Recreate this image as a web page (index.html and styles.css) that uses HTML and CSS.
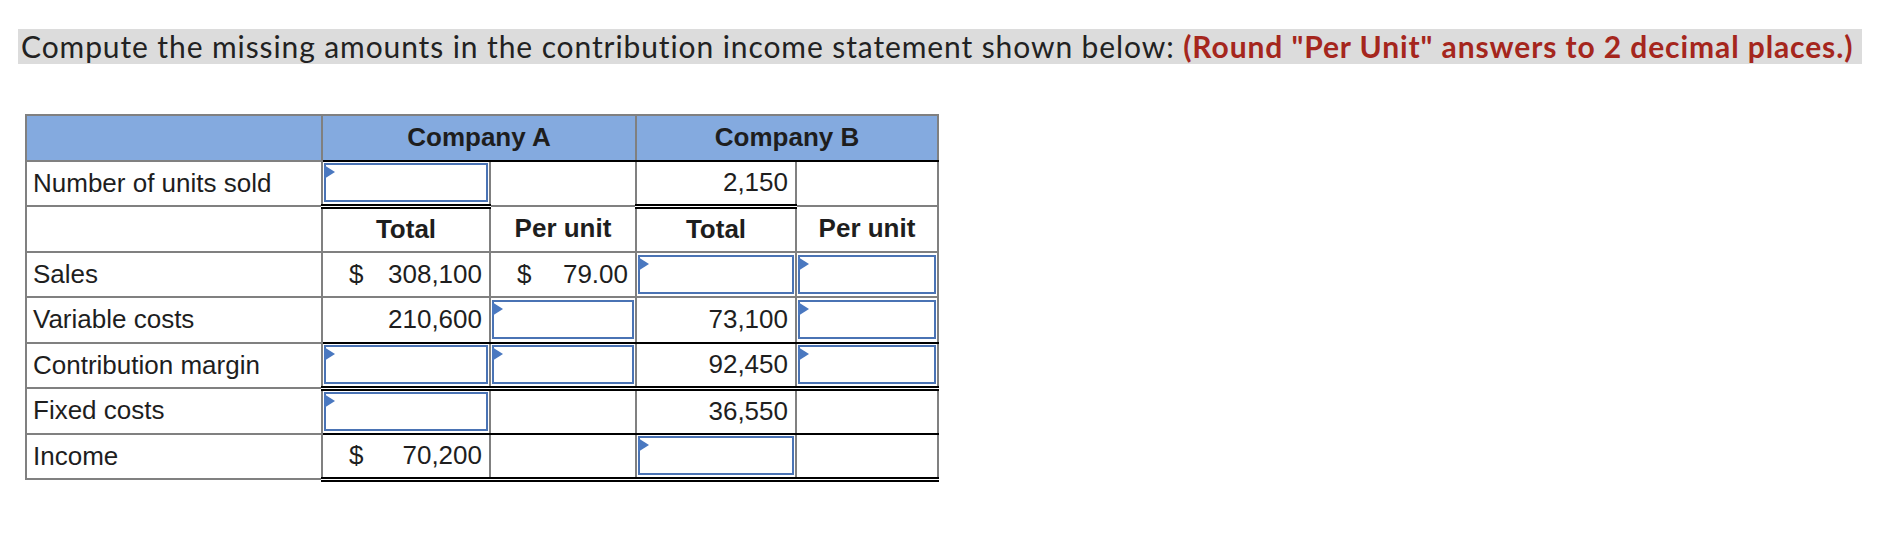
FILE: index.html
```html
<!DOCTYPE html>
<html lang="en">
<head>
<meta charset="utf-8">
<title>Contribution income statement</title>
<link rel="stylesheet" href="styles.css">
</head>
<body>
<div class="page">
  <p class="prompt"><span class="prompt-bg">Compute the missing amounts in the contribution income statement shown below: <strong class="note">(Round "Per Unit" answers to 2 decimal places.)</strong></span></p>

  <table class="stmt">
    <colgroup>
      <col class="c-label"><col class="c-at"><col class="c-au"><col class="c-bt"><col class="c-bu">
    </colgroup>
    <tr class="hdr">
      <th class="blank"></th>
      <th colspan="2" class="co">Company A</th>
      <th colspan="2" class="co">Company B</th>
    </tr>
    <tr>
      <td class="label">Number of units sold</td>
      <td class="inp-cell dbl"><div class="inp"></div></td>
      <td></td>
      <td class="num dbl">2,150</td>
      <td></td>
    </tr>
    <tr>
      <td class="label"></td>
      <th class="sub">Total</th>
      <th class="sub">Per unit</th>
      <th class="sub">Total</th>
      <th class="sub">Per unit</th>
    </tr>
    <tr>
      <td class="label">Sales</td>
      <td class="money"><div class="money-in"><span>$</span><span>308,100</span></div></td>
      <td class="money"><div class="money-in"><span>$</span><span>79.00</span></div></td>
      <td class="inp-cell"><div class="inp"></div></td>
      <td class="inp-cell"><div class="inp"></div></td>
    </tr>
    <tr>
      <td class="label">Variable costs</td>
      <td class="num sgl">210,600</td>
      <td class="inp-cell sgl"><div class="inp"></div></td>
      <td class="num sgl">73,100</td>
      <td class="inp-cell sgl"><div class="inp"></div></td>
    </tr>
    <tr>
      <td class="label">Contribution margin</td>
      <td class="inp-cell dbl"><div class="inp"></div></td>
      <td class="inp-cell dbl"><div class="inp"></div></td>
      <td class="num dbl">92,450</td>
      <td class="inp-cell dbl"><div class="inp"></div></td>
    </tr>
    <tr>
      <td class="label">Fixed costs</td>
      <td class="inp-cell sgl"><div class="inp"></div></td>
      <td class="sgl"></td>
      <td class="num sgl">36,550</td>
      <td class="sgl"></td>
    </tr>
    <tr>
      <td class="label">Income</td>
      <td class="money dbl"><div class="money-in"><span>$</span><span>70,200</span></div></td>
      <td class="dbl"></td>
      <td class="inp-cell dbl"><div class="inp"></div></td>
      <td class="dbl"></td>
    </tr>
  </table>
</div>
</body>
</html>
```

FILE: styles.css
```css
html, body {
  margin: 0;
  background: #ffffff;
}

.page {
  padding: 29px 0 0 18px;
}

.prompt {
  margin: 0;
  font-family: Lato, "Open Sans", sans-serif;
  font-size: 30px;
  line-height: 35px;
  letter-spacing: 0.9px;
  color: #222222;
}

.prompt-bg {
  display: inline-block;
  background: #dcdcdc;
  padding: 0 9px 0 3px;
}

.note {
  color: #a5261d;
  font-weight: 700;
}

.stmt {
  margin: 50px 0 0 7px;
  border-collapse: collapse;
  font-family: "Liberation Sans", Arial, sans-serif;
  font-size: 26px;
  color: #1e1e1e;
}

.c-label { width: 296px; }
.c-at { width: 168px; }
.c-au { width: 146px; }
.c-bt { width: 160px; }
.c-bu { width: 142px; }

.stmt tr {
  height: 45.5px;
}

.stmt th,
.stmt td {
  border: 2px solid #808080;
  padding: 0;
  vertical-align: middle;
}

.hdr th {
  background: #84aadf;
  font-weight: 700;
  text-align: center;
}

.hdr th.co {
  border-bottom-color: #000000;
}

.sub {
  font-weight: 700;
  text-align: center;
}

.label {
  padding: 0 6px !important;
  text-align: left;
}

.num {
  text-align: right;
  padding-right: 7px !important;
}

.money-in {
  display: flex;
  justify-content: space-between;
  padding: 0 7px 0 26px;
}

.stmt td.sgl {
  border-bottom: 2px solid #000000;
}

.stmt td.dbl {
  border-bottom: 5px double #000000;
}

.stmt td.inp-cell {
  padding: 1px;
}

.inp {
  position: relative;
  box-sizing: border-box;
  height: 39px;
  border: 2px solid #4a73b4;
  background: #ffffff;
}

.inp::before {
  content: "";
  position: absolute;
  left: -2px;
  top: 0;
  border-left: 11px solid #4a78c0;
  border-top: 7px solid transparent;
  border-bottom: 7px solid transparent;
}
```
